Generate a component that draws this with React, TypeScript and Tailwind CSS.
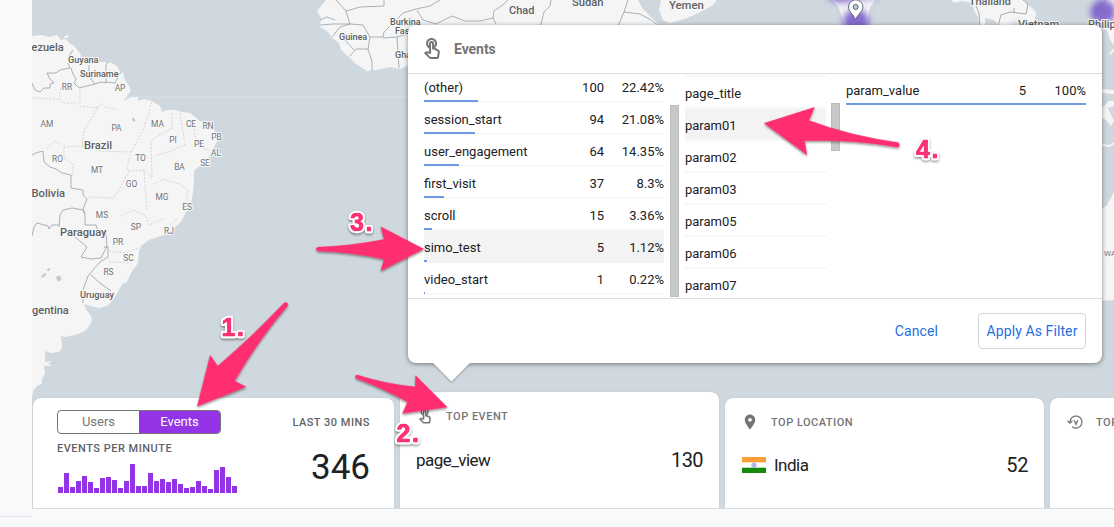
import React from "react";
import { MdOutlineTouchApp, MdLocationOn } from "react-icons/md";

const events = [
  { name: "(other)", count: "100", share: "22.42%", bar: 54 },
  { name: "session_start", count: "94", share: "21.08%", bar: 51 },
  { name: "user_engagement", count: "64", share: "14.35%", bar: 34.5 },
  { name: "first_visit", count: "37", share: "8.3%", bar: 20 },
  { name: "scroll", count: "15", share: "3.36%", bar: 8 },
  { name: "simo_test", count: "5", share: "1.12%", bar: 2.7, active: true },
  { name: "video_start", count: "1", share: "0.22%", bar: 0.5 },
];

const params = ["page_title", "param01", "param02", "param03", "param05", "param06", "param07"];

const minutes = [
  6, 20, 6, 12, 17, 11, 5, 15, 16, 13, 5, 12, 29, 7, 7, 20, 12, 14, 11, 14, 9, 5, 6, 12, 7, 4, 23, 26, 16, 7,
];

const countryLabels: [string, number, number, number][] = [
  ["ezuela", 31.5, 51, 11],
  ["Guyana", 68, 62.5, 9.1],
  ["Suriname", 80, 76.5, 9],
  ["Brazil", 84, 149, 11.2],
  ["Bolivia", 31.5, 197, 11.2],
  ["Paraguay", 60, 236, 11.1],
  ["Uruguay", 80, 298, 9.2],
  ["gentina", 32, 314, 11],
  ["Burkina", 390, 24.5, 9],
  ["Faso", 395, 33.5, 9],
  ["Guinea", 339, 39.5, 9],
  ["Ghana", 395, 57.5, 9],
  ["Chad", 509, 14, 11],
  ["Sudan", 572, 6, 11.2],
  ["Yemen", 669, 9, 11.3],
  ["Thailand", 969, 5, 10.8],
  ["Vietnam", 1018, 28, 11],
  ["Philippines", 1088, 28, 11],
];

const stateLabels: [string, number, number][] = [
  ["RR", 67, 90], ["AP", 120, 91], ["AM", 47, 127], ["PA", 116.5, 131], ["MA", 157.5, 127],
  ["CE", 191, 127], ["RN", 208, 129], ["PB", 216.5, 140], ["PI", 173, 143], ["PE", 199, 147],
  ["AL", 216, 156], ["SE", 205, 166], ["BA", 179.5, 170], ["TO", 140.5, 161], ["RO", 57.5, 162],
  ["MT", 97, 173], ["GO", 131.5, 187], ["MG", 162, 200], ["ES", 187, 210], ["MS", 102, 218],
  ["SP", 136, 230], ["RJ", 169, 234], ["PR", 118, 245], ["SC", 128.5, 261], ["RS", 108.5, 275],
];

function WorldMap() {
  return (
    <svg className="absolute inset-0" width="1082" height="508" viewBox="32 0 1082 508">
      <defs>
        <filter id="heat" x="-50%" y="-50%" width="200%" height="200%">
          <feGaussianBlur stdDeviation="3" />
        </filter>
      </defs>
      <rect x="32" y="0" width="1082" height="508" fill="#cfd8de" />
      <rect x="125" y="95" width="290" height="3" fill="#d4dce2" />
      <g fill="#f5f5f5">
        <path d="M32 36 L42 35 L49 37 L57 35 L61 40 L66 39 L69 43 L74 46 L80 53 L82 58 L91 61 L105 62 L112 63 L117 66 L120 71 L123 73 L125 80 L129 86 L131 91 L127 96 L124 101 L131 97 L138 97 L138 101 L144 99 L152 101 L160 106 L162 112 L166 110 L175 110 L182 112 L190 113 L200 121 L211 127 L216 132 L217 141 L213 149 L209 157 L204 163 L197 168 L194 171 L194 179 L193 192 L191 204 L185 214 L181 222 L173 229 L171 233 L160 236 L149 240 L141 246 L139 251 L138 263 L131 273 L127 282 L122 284 L118 292 L113 300 L107 306 L99 308 L90 306 L84 304 L86 309 L91 316 L92 321 L88 328 L85 331 L75 335 L65 337 L61 336 L62 348 L59 352 L51 353 L45 351 L45 358 L45 362 L52 361 L48 364 L53 366 L44 366 L45 373 L42 379 L42 384 L37 386 L33 391 L32 398 Z" />
        <path d="M63 38 L68 34 L68 38 Z" />
        <path d="M326 0 L317 11 L321 18 L320 27 L328 32 L332 38 L339 43 L341 50 L349 57 L356 64 L367 71 L376 70 L390 67 L400 69 L411 64 L430 60 L640 60 L662 32 L658 24 L651 17 L643 9 L638 0 Z" />
        <path d="M661 0 L659 10 L663 20 L670 23 L681 20 L692 16 L706 9 L713 5 L717 0 Z" />
        <path d="M832 0 L838 6 L842 17 L846 32 L864 32 L868 18 L870 8 L875 0 Z" />
        <path d="M951 0 L954 3 L962 1 L972 3 L974 10 L978 17 L980 28 L985 28 L985 18 L994 20 L1001 28 L1026 28 L1035 20 L1036 12 L1029 5 L1024 0 Z" />
        <path d="M1093 28 L1096 18 L1101 8 L1108 0 L1114 0 L1114 45 L1110 40 L1107 30 Z" />
        <path d="M1102 89 L1114 90 L1114 94 L1102 93 Z M1102 108 L1109 101 L1114 101 L1114 106 L1108 108 L1112 117 L1114 121 L1111 126 L1106 120 L1102 118 Z" />
        <path d="M1100 210 L1107 205 L1114 192 L1114 300 L1100 301 Z" />
      </g>
      <path d="M1102 145 L1109 146 L1114 143" fill="none" stroke="#f5f5f5" strokeWidth="2" />
      <path d="M1110 54 L1114 49" stroke="#f5f5f5" strokeWidth="2" />
      <path d="M41 277 l4 -4 l1 2 l-3 2 Z M47 270 l3 -2 l-1 3 Z M56 277 l4 -1 l1 4 l-3 1 Z M132 119 l2 -1 l1 3 l-2 0 Z" fill="#c5c8ca" stroke="#c5c8ca" strokeWidth="0.700" />
      <path d="M32 83 L35 90 L40 92 L44 88 L50 88 L50 84 L54 83 L50 79 L47 73 L56 73 L60 70 L70 68 L68 63 M69 56 L73 50 M71 68 L73 74 L76 79 L74 83 L79 88 L95 84 L89 76 L89 65 M95 84 L101 82 L106 83 L106 65 L108 62 M106 82 L115 83 L119 75 L121 72 M32 155 L36 153 L43 151 L44 162 L50 167 L56 169 L62 173 L71 175 L71 188 L83 190 L83 195 L87 199 L83 209 L85 213 M32 236 L34 227 L37 223 L48 226 L49 229 L52 225 L58 225 L59 225 M59 227 L60 215 L63 210 L72 208 L83 210 L85 215 L85 225 L96 225 L98 232 M75 237 L87 247 L81 257 L91 259 L101 258 L107 246 L106 234 M104 247 L108 247 L108 257 L100 262 L88 276 L83 290 L83 303 M91 275 L100 283 L111 291" fill="none" stroke="#8e9ba5" strokeWidth="0.75" strokeLinejoin="round" />
      <path d="M32 98 L58 99 M61 88 L59 99 L63 103 L75 103 M80 88 L80 106 L98 108 L84 130 L82 146 M96 108 L103 104 M105 107 L118 110 M152 102 L144 128 L137 142 L131 152 M64 147 L64 158 L73 164 L73 176 M64 147 L82 146 L99 151 L131 152 L127 168 L129 171 L144 170 L152 178 L151 140 L162 134 L172 128 M172 113 L172 130 M180 113 L185 145 L171 151 L155 156 M194 129 L196 145 L210 151 M129 171 L120 188 L113 198 L88 197 M144 170 L145 186 L147 210 M154 184 L164 179 L179 184 L188 190 L185 209 M47 148 L55 141 L61 145 M121 216 L133 210 L145 215 L149 225 L164 218 M109 251 L126 253 L138 248 M109 262 L129 263 M176 219 L168 229" fill="none" stroke="#c9cbcd" strokeWidth="0.8" strokeDasharray="2 1.500" />
      <path d="M336 0 L346 11 L360 7 L384 6 L384 0 M346 11 L350 24 L333 24 L320 25 M320 20 L327 17 L335 20 M332 37 L340 27 L350 24 L363 25 L370 37 L368 49 L356 49 L350 56 M345 40 L354 50 M370 37 L383 37 L384 32 L393 23 L403 13 L416 9 L430 6 L440 0 M368 49 L372 61 L372 71 M417 10 L423 20 L436 24 L452 16 L465 21 L480 21 L493 18 L494 11 L504 4 L508 0 M383 38 L397 37 L399 68 M493 18 L496 24 M540 28 L544 12 L550 6 L551 0 M618 26 L624 12 L628 0 M624 12 L640 14 L651 20 L660 27 M397 37 L408 34" fill="none" stroke="#8e9ba5" strokeWidth="0.75" />
      <path d="M976 6 L979 13 L980 28 M998 26 L1001 15 L1010 12 L1026 14 L1028 4 L1023 0 M1014 12 L1014 8" fill="none" stroke="#8c979f" strokeWidth="0.8" />
      <g filter="url(#heat)">
        <ellipse cx="842" cy="-3" rx="14" ry="6" fill="#7b5ccb" opacity="0.75" />
        <ellipse cx="856" cy="-4" rx="24" ry="5" fill="#8a6fd0" opacity="0.6" />
        <circle cx="856" cy="22" r="13" fill="#6a4bc4" opacity="0.8" />
        <circle cx="1103" cy="12" r="12.500" fill="#6a4bc4" opacity="0.8" />
        <circle cx="1016" cy="26" r="4" fill="#b9a7e6" opacity="0.7" />
      </g>
      <g fontFamily="Roboto, 'Liberation Sans', sans-serif" fill="#5c5f62" stroke="#f8f8f8" strokeWidth="2" paintOrder="stroke" strokeLinejoin="round">
        {countryLabels.map(([t, x, y, s]) => (
          <text key={t} x={x} y={y} fontSize={s} fontWeight="500">{t}</text>
        ))}
        {stateLabels.map(([t, x, y]) => (
          <text key={t} x={x} y={y} fontSize="8.4" fill="#707376" textAnchor="middle">{t}</text>
        ))}
        <text x="1104" y="255.500" fontSize="8" fill="#707376">WA</text>
      </g>
      <path d="M855.500 19.500 C853 14 848.500 11.500 848.500 7 A7.200 7.200 0 1 1 862.900 7 C862.900 11.500 858 14 855.500 19.500 Z" fill="#fff" stroke="#54606c" strokeWidth="0.9" />
      <circle cx="855.700" cy="7" r="2.500" fill="#c3cdd8" stroke="#54606c" strokeWidth="1" />
    </svg>
  );
}

function CardTitle({ icon, children }: { icon: React.ReactNode; children: React.ReactNode }) {
  return (
    <div className="flex h-[18px] items-center text-[#757575]">
      <span className="flex w-[30px] shrink-0">{icon}</span>
      <span className="whitespace-nowrap pt-[2px] text-[11px] font-medium leading-[18px] tracking-[0.5px]">{children}</span>
    </div>
  );
}

function VersionIcon() {
  return (
    <svg width="18" height="18" viewBox="0 0 18 18" fill="none" stroke="#757575" strokeWidth="1.300">
      <path d="M4 9.500 V9 A6 6 0 1 1 6.200 13.700" />
      <path d="M1.600 7.800 L4 10.200 L6.400 7.800" />
      <path d="M8.200 7.300 L10 11.300 L11.800 7.300" />
    </svg>
  );
}

function IndiaFlag() {
  return (
    <svg className="ml-px" width="24" height="16" viewBox="0 0 24 16">
      <rect width="24" height="16" rx="0.500" fill="#fff" />
      <rect width="24" height="5.300" fill="#fb9f35" />
      <rect y="10.700" width="24" height="5.300" fill="#15890c" />
      <circle cx="12" cy="8" r="2.200" fill="#dcdcf4" stroke="#8585cf" strokeWidth="0.700" />
      <circle cx="12" cy="8" r="0.700" fill="#5b5bb5" />
    </svg>
  );
}

function EventsDialog() {
  return (
    <div className="absolute left-[376px] top-[25px] flex h-[338px] w-[694px] flex-col rounded-lg bg-white shadow-[0_1px_5px_rgba(0,0,0,0.45)]">
      <div className="flex h-[49px] shrink-0 items-center border-b border-[#dadce0] pl-3 text-[#757575]">
        <MdOutlineTouchApp size={24} />
        <span className="pl-[10px] text-[14px] font-bold tracking-[-0.05px]">Events</span>
      </div>
      <div className="flex h-[224px] shrink-0 overflow-hidden pl-4 text-[13px] text-[#202124]">
        <div className="-mt-[3px] w-[240px] shrink-0">
          {events.map((e) => (
            <div
              key={e.name}
              className={`relative flex h-8 items-center border-b-2 pt-[3px] ${e.active ? "border-[#f3f3f3] bg-[#f3f3f3]" : "border-[#f7f7f7]"}`}
            >
              <span className="flex-1">{e.name}</span>
              <span className="w-[60px] text-right">{e.count}</span>
              <span className="w-[60px] text-right">{e.share}</span>
              <span className="absolute -bottom-px left-0 h-0.5 bg-[#6f9ae3]" style={{ width: e.bar }} />
            </div>
          ))}
        </div>
        <div className="ml-[6px] mt-[31px] h-[192px] w-[9px] shrink-0 border border-[#bcbcbc] bg-[#c8c8c8]" />
        <div className="ml-[6px] mt-[1px] w-[141px] shrink-0 border-t-2 border-[#f7f7f7]">
          {params.map((p) => (
            <div
              key={p}
              className={`flex h-8 items-center border-b-2 border-[#f7f7f7] pt-[3px] ${p === "param01" ? "bg-[#f3f3f3]" : ""}`}
            >
              {p}
            </div>
          ))}
        </div>
        <div className="ml-[5px] mt-[29px] h-[48px] w-[9px] shrink-0 border border-[#bcbcbc] bg-[#c8c8c8]" />
        <div className="ml-[6px] flex h-[31px] w-[240px] shrink-0 items-center border-b-2 border-[#6f9ae3] pt-[5px]">
          <span className="flex-1">param_value</span>
          <span className="w-[60px] text-right">5</span>
          <span className="w-[60px] text-right">100%</span>
        </div>
      </div>
      <div className="flex flex-1 items-center justify-end border-t border-[#dadce0] pr-4 text-[14px] text-[#1f6fe5]">
        <span className="pr-[40px] tracking-[0.1px]">Cancel</span>
        <span className="flex h-[36px] w-[108px] items-center justify-center whitespace-nowrap rounded border border-[#d3d6da] tracking-[0.1px]">
          Apply As Filter
        </span>
      </div>
      <svg className="absolute left-[22px] top-[338px] overflow-visible" width="42" height="20" viewBox="0 0 42 20">
        <path d="M3 0 L21.500 18.500 L40 0 Z" fill="#fff" className="drop-shadow-[0_1px_1px_rgba(0,0,0,0.3)]" />
        <rect x="0" y="-4" width="42" height="4" fill="#fff" />
      </svg>
    </div>
  );
}

function Cards() {
  const card = "shrink-0 rounded-t-lg bg-white shadow-[0_0_1px_rgba(60,64,67,0.3)]";
  return (
    <div className="absolute bottom-0 left-[1px] flex items-end gap-[6px]">
      <div className={`${card} flex h-[110px] w-[361px] justify-between pl-6 pr-6 pt-3`}>
        <div>
          <div className="flex h-6 w-[164px] overflow-hidden rounded border border-[#757575] text-[13px]">
            <span className="flex flex-1 items-center justify-center text-[#757575]">Users</span>
            <span className="-my-px -mr-px flex w-[82px] items-center justify-center bg-[#9334e6] pr-px text-white">Events</span>
          </div>
          <div className="mt-[6px] text-[11px] font-medium leading-[18px] tracking-[0.5px] text-[#5f6368]">EVENTS PER MINUTE</div>
          <div className="ml-[1px] mt-[6px] flex h-[29px] items-end gap-px">
            {minutes.map((h, i) => (
              <span key={i} className="w-[5px] bg-[#9334e6]" style={{ height: h }} />
            ))}
          </div>
        </div>
        <div className="flex flex-col items-end pt-px">
          <div className="text-[11px] font-medium leading-6 tracking-[0.5px] text-[#5f6368]">LAST 30 MINS</div>
          <div className="mt-[11px] text-[35px] leading-[44px] text-[#202124]">346</div>
        </div>
      </div>
      <div className={`${card} h-[116px] w-[319px] pl-4 pr-4 pt-[15px]`}>
        <CardTitle icon={<MdOutlineTouchApp size={18} />}>TOP EVENT</CardTitle>
        <div className="mt-[22px] flex items-center justify-between text-[#202124]">
          <span className="text-[17px] leading-6 tracking-[-0.55px]">page_view</span>
          <span className="pt-px text-[20px] leading-6 tracking-[-0.6px]">130</span>
        </div>
      </div>
      <div className={`${card} h-[110px] w-[319px] pl-4 pr-4 pt-[15px]`}>
        <CardTitle icon={<MdLocationOn size={18} />}>TOP LOCATION</CardTitle>
        <div className="mt-[22px] flex items-center text-[#202124]">
          <IndiaFlag />
          <span className="pl-[8px] text-[17px] leading-6 tracking-[-0.5px]">India</span>
          <span className="ml-auto text-[20px] leading-6 tracking-[-0.4px]">52</span>
        </div>
      </div>
      <div className={`${card} h-[110px] w-[319px] pl-4 pt-[15px]`}>
        <CardTitle icon={<VersionIcon />}>TOP VERSION</CardTitle>
      </div>
    </div>
  );
}

function Annotations() {
  return (
    <svg className="pointer-events-none absolute inset-0" width="1114" height="527" viewBox="0 0 1114 527">
      <defs>
        <filter id="shade" x="-10%" y="-10%" width="120%" height="130%">
          <feDropShadow dx="0" dy="1.500" stdDeviation="1" floodColor="#000" floodOpacity="0.45" />
        </filter>
      </defs>
      <g fill="#ff2d6f" stroke="#ff2d6f" strokeWidth="0.600" strokeLinejoin="round">
        <path filter="url(#shade)" d="M197.500 406 L210.300 355.500 L217.700 366.300 Q252 337 284.500 302.800 Q288.500 302 287.600 305.500 Q258 340 234.300 381 L245.700 386.700 Z" />
        <path filter="url(#shade)" d="M447 407 L415.700 375.800 L415.500 387 Q385 384 357 375 Q354.300 375.500 356 378 Q385 389 407.700 402 L402.700 413.300 Z" />
        <path filter="url(#shade)" d="M423.500 249 L381 227 L384.300 239.500 Q352 246 317.500 247.300 Q315 249 317.500 250.800 Q352 252 384.300 259 L381 270.500 Z" />
        <path filter="url(#shade)" d="M764.500 123.300 L814.300 107.500 L808.700 120.500 Q850 136 898.500 142.700 Q900 145 898.500 147 Q850 139 804.500 140.500 L806.700 154.500 Z" />
      </g>
      <g filter="url(#shade)" fontFamily="'Liberation Sans', Arial, sans-serif" fontWeight="700" fontSize="25" fill="#fb3273" stroke="#fff" strokeWidth="4.500" paintOrder="stroke" strokeLinejoin="round">
        <text x="221.500" y="335.500" textLength="22.500">1.</text>
        <text x="396.500" y="441.500" textLength="22.500">2.</text>
        <text x="350" y="230.500" textLength="22.500">3.</text>
        <text x="916" y="157.500" textLength="22.500">4.</text>
        <g stroke="#fb3273" strokeWidth="0.700" paintOrder="normal">
          <text x="221.500" y="335.500" textLength="22.500" aria-hidden="true">1.</text>
          <text x="396.500" y="441.500" textLength="22.500" aria-hidden="true">2.</text>
          <text x="350" y="230.500" textLength="22.500" aria-hidden="true">3.</text>
          <text x="916" y="157.500" textLength="22.500" aria-hidden="true">4.</text>
        </g>
      </g>
    </svg>
  );
}

export default function App() {
  return (
    <div className="relative flex h-[527px] w-[1114px] overflow-hidden bg-[#f8f9fb] font-[Roboto,'Liberation_Sans',sans-serif]">
      <div className="w-8 shrink-0 pt-[516px]">
        <div className="h-px bg-[#e4e6e9]" />
      </div>
      <div className="flex flex-1 flex-col overflow-hidden">
        <div className="relative h-[509px] shrink-0 overflow-hidden border-b border-[#dadce0]">
          <WorldMap />
          <Cards />
          <EventsDialog />
        </div>
      </div>
      <Annotations />
    </div>
  );
}
